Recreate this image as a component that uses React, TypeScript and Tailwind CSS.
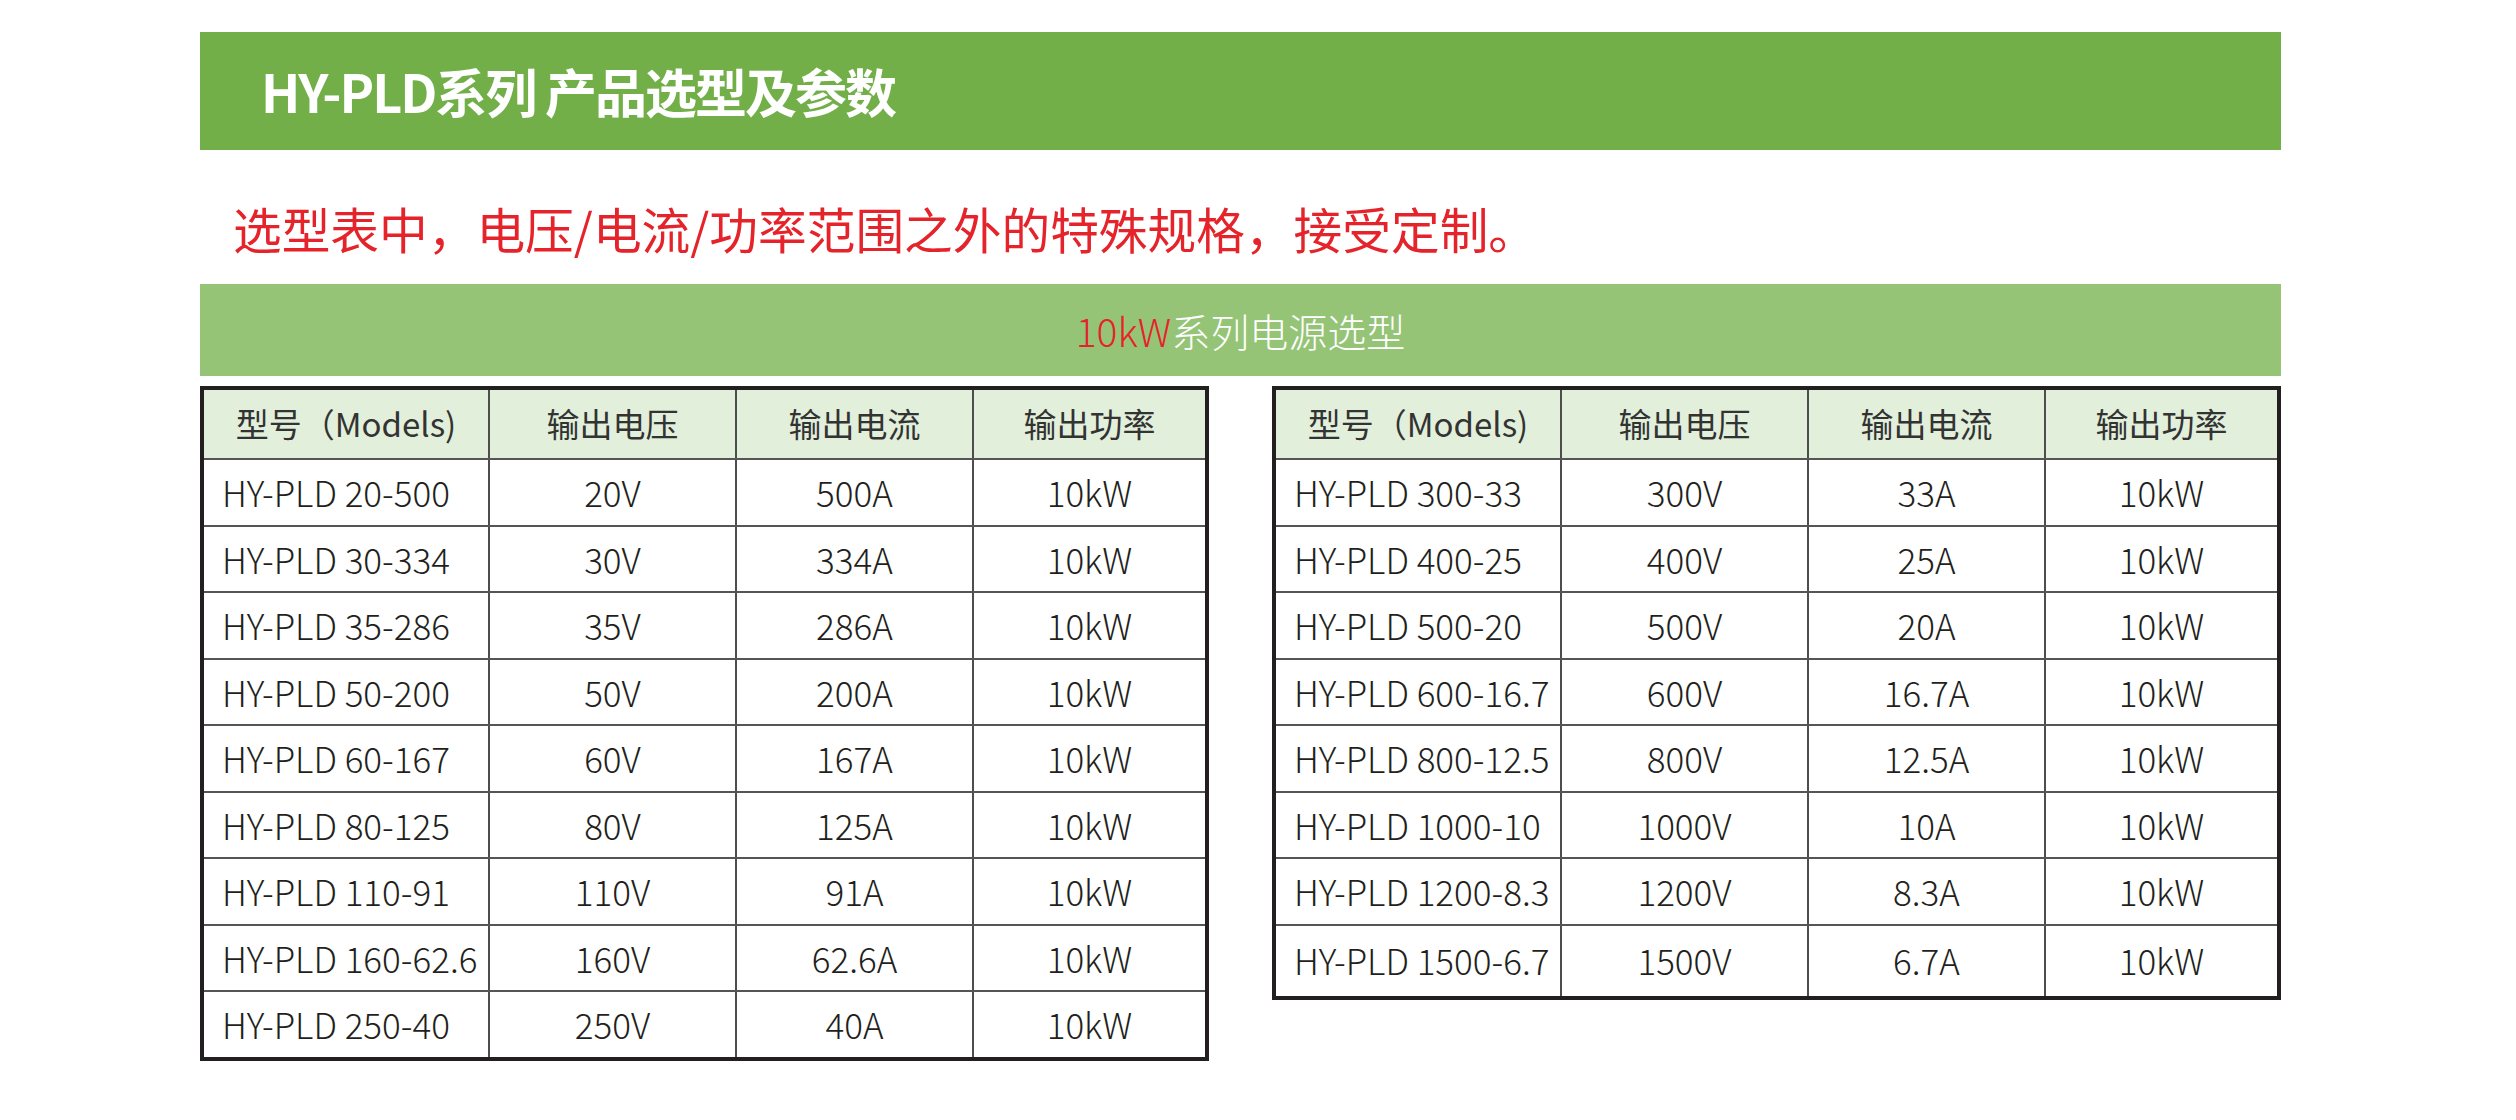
import React from 'react';

type Row = [string, string, string, string];

const leftRows: Row[] = [
  ['HY-PLD 20-500', '20V', '500A', '10kW'],
  ['HY-PLD 30-334', '30V', '334A', '10kW'],
  ['HY-PLD 35-286', '35V', '286A', '10kW'],
  ['HY-PLD 50-200', '50V', '200A', '10kW'],
  ['HY-PLD 60-167', '60V', '167A', '10kW'],
  ['HY-PLD 80-125', '80V', '125A', '10kW'],
  ['HY-PLD 110-91', '110V', '91A', '10kW'],
  ['HY-PLD 160-62.6', '160V', '62.6A', '10kW'],
  ['HY-PLD 250-40', '250V', '40A', '10kW'],
];

const rightRows: Row[] = [
  ['HY-PLD 300-33', '300V', '33A', '10kW'],
  ['HY-PLD 400-25', '400V', '25A', '10kW'],
  ['HY-PLD 500-20', '500V', '20A', '10kW'],
  ['HY-PLD 600-16.7', '600V', '16.7A', '10kW'],
  ['HY-PLD 800-12.5', '800V', '12.5A', '10kW'],
  ['HY-PLD 1000-10', '1000V', '10A', '10kW'],
  ['HY-PLD 1200-8.3', '1200V', '8.3A', '10kW'],
  ['HY-PLD 1500-6.7', '1500V', '6.7A', '10kW'],
];

const headers = ['型号（Models)', '输出电压', '输出电流', '输出功率'];

function SpecTable({ rows, lastTall }: { rows: Row[]; lastTall?: boolean }) {
  return (
    <div className="w-[1009px] border-4 border-[#231f20] bg-white">
      <div className="grid h-[68px] grid-cols-[284px_247px_237px_1fr] bg-[#e2efda] text-[33px] text-[#333]">
        {headers.map((h, i) => (
          <div
            key={h}
            className={`flex items-center justify-center ${i > 0 ? 'border-l-2 border-[#4d4d4d]' : ''}`}
          >
            {h}
          </div>
        ))}
      </div>
      {rows.map((r, ri) => (
        <div
          key={r[0]}
          className={`grid grid-cols-[284px_247px_237px_1fr] border-t-2 border-[#555] text-[35px] font-light text-[#231f20] ${
            lastTall && ri === rows.length - 1 ? 'h-[72px]' : 'h-[66.5px]'
          }`}
        >
          <div className="flex items-center pl-[18px] whitespace-nowrap">{r[0]}</div>
          <div className="flex items-center justify-center border-l-2 border-[#4d4d4d]">{r[1]}</div>
          <div className="flex items-center justify-center border-l-2 border-[#4d4d4d]">{r[2]}</div>
          <div className="flex items-center justify-center border-l-2 border-[#4d4d4d]">{r[3]}</div>
        </div>
      ))}
    </div>
  );
}

export default function App() {
  return (
    <div className="h-[1120px] w-[2516px] bg-white [font-family:'Noto_Sans_CJK_SC','Noto_Sans',sans-serif]">
      <div className="ml-[200px] w-[2081px] pt-[32px]">
        <div className="flex h-[118px] items-center bg-[#72af48] pl-[61px] text-[52px] font-bold leading-none tracking-[-2px] text-white">
          HY-PLD系列 产品选型及参数
        </div>

        <div className="mt-[53px] h-[50px] pl-[33px] text-[48.7px] leading-[50px] text-[#e5232a]">
          选型表中，电压/电流/功率范围之外的特殊规格，接受定制。
        </div>

        <div className="mt-[31px] flex h-[92px] items-center justify-center bg-[#95c477] text-[39px] font-light text-white">
          <span className="text-[#e5232a]">10kW</span>
          <span>系列电源选型</span>
        </div>

        <div className="mt-[10px] flex items-start gap-[63px]">
          <SpecTable rows={leftRows} />
          <SpecTable rows={rightRows} lastTall />
        </div>
      </div>
    </div>
  );
}
